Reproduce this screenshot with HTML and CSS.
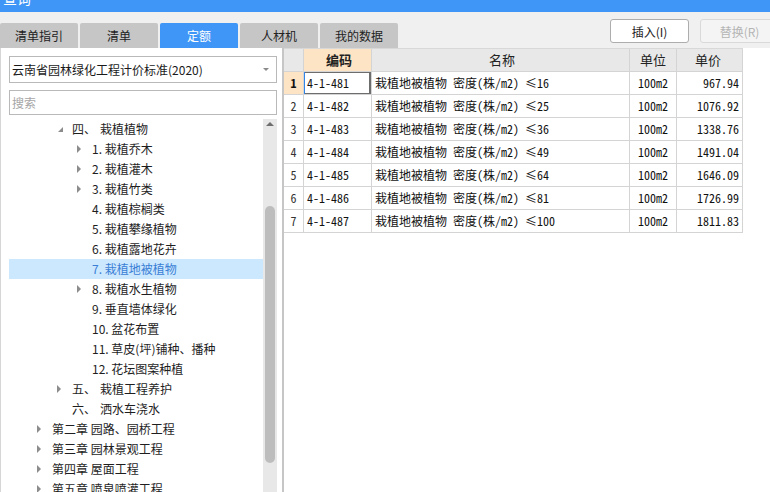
FILE: index.html
```html
<!DOCTYPE html>
<html lang="zh-CN">
<head>
<meta charset="utf-8">
<title>查询</title>
<link rel="stylesheet" href="styles.css">
</head>
<body>
<div class="titlebar"><span class="title">查询</span></div>
<div class="toolbar">
  <div class="tabs">
    <div class="tab">清单指引</div>
    <div class="tab">清单</div>
    <div class="tab active">定额</div>
    <div class="tab">人材机</div>
    <div class="tab">我的数据</div>
  </div>
  <div class="actions">
    <button class="btn">插入(I)</button>
    <button class="btn disabled">替换(R)</button>
  </div>
</div>
<div class="main">
  <aside class="side">
    <div class="select"><span>云南省园林绿化工程计价标准(2020)</span><i class="caret"></i></div>
    <div class="search">搜索</div>
    <div class="tree-wrap">
      <ul class="tree">
        <li class="node l1"><i class="tw open"></i><span class="num">四、</span>栽植植物</li>
        <li class="node l2"><i class="tw closed"></i>1. 栽植乔木</li>
        <li class="node l2"><i class="tw closed"></i>2. 栽植灌木</li>
        <li class="node l2"><i class="tw closed"></i>3. 栽植竹类</li>
        <li class="node l2"><i class="tw"></i>4. 栽植棕榈类</li>
        <li class="node l2"><i class="tw"></i>5. 栽植攀缘植物</li>
        <li class="node l2"><i class="tw"></i>6. 栽植露地花卉</li>
        <li class="node l2 selected"><i class="tw"></i>7. 栽植地被植物</li>
        <li class="node l2"><i class="tw closed"></i>8. 栽植水生植物</li>
        <li class="node l2"><i class="tw"></i>9. 垂直墙体绿化</li>
        <li class="node l2"><i class="tw"></i>10. 盆花布置</li>
        <li class="node l2"><i class="tw"></i>11. 草皮(坪)铺种、播种</li>
        <li class="node l2"><i class="tw"></i>12. 花坛图案种植</li>
        <li class="node l1"><i class="tw closed"></i><span class="num">五、</span>栽植工程养护</li>
        <li class="node l1"><i class="tw"></i><span class="num">六、</span>洒水车浇水</li>
        <li class="node l0"><i class="tw closed"></i>第二章 园路、园桥工程</li>
        <li class="node l0"><i class="tw closed"></i>第三章 园林景观工程</li>
        <li class="node l0"><i class="tw closed"></i>第四章 屋面工程</li>
        <li class="node l0"><i class="tw closed"></i>第五章 喷泉喷灌工程</li>
      </ul>
      <div class="vscroll"><i class="up"></i><span class="thumb"></span></div>
    </div>
  </aside>
  <section class="pane">
    <div class="grid">
      <div class="row head">
        <div class="c rn"></div>
        <div class="c code active-col">编码</div>
        <div class="c name">名称</div>
        <div class="c unit">单位</div>
        <div class="c price">单价</div>
      </div>
      <div class="row">
        <div class="c rn current">1</div>
        <div class="c code cursor">4-1-481</div>
        <div class="c name">栽植地被植物 密度(株/m2) ≤16</div>
        <div class="c unit">100m2</div>
        <div class="c price">967.94</div>
      </div>
      <div class="row">
        <div class="c rn">2</div>
        <div class="c code">4-1-482</div>
        <div class="c name">栽植地被植物 密度(株/m2) ≤25</div>
        <div class="c unit">100m2</div>
        <div class="c price">1076.92</div>
      </div>
      <div class="row">
        <div class="c rn">3</div>
        <div class="c code">4-1-483</div>
        <div class="c name">栽植地被植物 密度(株/m2) ≤36</div>
        <div class="c unit">100m2</div>
        <div class="c price">1338.76</div>
      </div>
      <div class="row">
        <div class="c rn">4</div>
        <div class="c code">4-1-484</div>
        <div class="c name">栽植地被植物 密度(株/m2) ≤49</div>
        <div class="c unit">100m2</div>
        <div class="c price">1491.04</div>
      </div>
      <div class="row">
        <div class="c rn">5</div>
        <div class="c code">4-1-485</div>
        <div class="c name">栽植地被植物 密度(株/m2) ≤64</div>
        <div class="c unit">100m2</div>
        <div class="c price">1646.09</div>
      </div>
      <div class="row">
        <div class="c rn">6</div>
        <div class="c code">4-1-486</div>
        <div class="c name">栽植地被植物 密度(株/m2) ≤81</div>
        <div class="c unit">100m2</div>
        <div class="c price">1726.99</div>
      </div>
      <div class="row">
        <div class="c rn">7</div>
        <div class="c code">4-1-487</div>
        <div class="c name">栽植地被植物 密度(株/m2) ≤100</div>
        <div class="c unit">100m2</div>
        <div class="c price">1811.83</div>
      </div>
    </div>
  </section>
</div>
</body>
</html>
```

FILE: styles.css
```css
* { box-sizing: border-box; }
html, body { margin: 0; padding: 0; }
body {
  width: 770px;
  height: 492px;
  overflow: hidden;
  background: #f0f0f0;
  font-family: "Noto Sans CJK SC", "Noto Sans", sans-serif;
  font-size: 12px;
  color: #222;
}

.titlebar {
  height: 12px;
  background: #3f96f6;
  overflow: hidden;
}
.title {
  display: block;
  color: #fff;
  font-size: 14px;
  line-height: 14px;
  margin-top: -9px;
  padding-left: 3px;
}

.toolbar {
  height: 36px;
  display: flex;
  justify-content: space-between;
  overflow: hidden;
}
.tabs {
  display: flex;
  gap: 2px;
  align-self: flex-end;
}
.tab {
  width: 78px;
  height: 25px;
  line-height: 25px;
  text-align: center;
  background: #c6c6c6;
  border-radius: 2px 2px 0 0;
  color: #222;
  font-size: 12px;
}
.tab.active {
  background: #3f96f6;
  color: #fff;
}
.actions {
  display: flex;
  gap: 11px;
  margin-top: 7px;
  margin-right: -9px;
  align-self: flex-start;
}
.btn {
  width: 79px;
  height: 24px;
  padding: 0;
  background: #fff;
  border: 1px solid #adadad;
  border-radius: 3px;
  font-family: "Noto Sans CJK SC", "Noto Sans", sans-serif;
  font-size: 12px;
  color: #222;
}
.btn.disabled {
  background: #f4f4f4;
  border-color: #d9d9d9;
  color: #b4b4b4;
}

.main {
  display: flex;
  height: 444px;
}
.side {
  width: 284px;
  flex: none;
  background: #fff;
  border-left: 1px solid #d6d6d6;
  border-right: 2px solid #c6c6c6;
  padding: 8px 5px 0 8px;
  display: flex;
  flex-direction: column;
  overflow: hidden;
}
.select {
  height: 27px;
  border: 1px solid #b9b9b9;
  display: flex;
  align-items: center;
  justify-content: space-between;
  padding: 0 7px 0 2px;
  font-size: 12px;
  color: #1a1a1a;
}
.caret {
  width: 0;
  height: 0;
  border-left: 3px solid transparent;
  border-right: 3px solid transparent;
  border-top: 3px solid #8a8a8a;
}
.search {
  margin-top: 7px;
  height: 25px;
  line-height: 23px;
  border: 1px solid #b9b9b9;
  padding-left: 2px;
  color: #a6a6a6;
  font-size: 12px;
}
.tree-wrap {
  margin-top: 4px;
  flex: 1;
  display: flex;
  min-height: 0;
}
.tree {
  list-style: none;
  margin: 0;
  padding: 0;
  flex: 1;
  overflow: hidden;
}
.node {
  height: 20px;
  line-height: 20px;
  display: flex;
  align-items: center;
  white-space: nowrap;
  color: #1e1e1e;
}
.node.l0 { padding-left: 28px; }
.node.l1 { padding-left: 48px; }
.node.l2 { padding-left: 68px; }
.node.selected {
  background: #cce8ff;
  color: #3a7fd5;
}
.num { margin-right: 4px; }
.tw {
  width: 15px;
  height: 20px;
  flex: none;
  position: relative;
}
.tw.closed::before {
  content: "";
  position: absolute;
  left: 0;
  top: 6px;
  border-left: 4px solid #8c8c8c;
  border-top: 4px solid transparent;
  border-bottom: 4px solid transparent;
}
.tw.open::before {
  content: "";
  position: absolute;
  left: 1px;
  top: 8px;
  border-right: 5px solid #8c8c8c;
  border-top: 5px solid transparent;
}

.vscroll {
  width: 14px;
  flex: none;
  background: #e8e8e8;
  position: relative;
}
.vscroll .up {
  position: absolute;
  left: 3px;
  top: 3px;
  border-left: 4px solid transparent;
  border-right: 4px solid transparent;
  border-bottom: 4px solid #6e6e6e;
}
.vscroll .thumb {
  position: absolute;
  left: 2px;
  top: 87px;
  width: 10px;
  height: 257px;
  border-radius: 5px;
  background: #bdbdbd;
}

.pane {
  flex: 1;
  background: #fff;
}
.grid {
  font-family: "Noto Sans Mono CJK SC", "Liberation Mono", "Noto Sans CJK SC", monospace;
  font-size: 12px;
  color: #111;
  border-top: 1px solid #d8d8d8;
  width: 459px;
}
.row {
  display: grid;
  grid-template-columns: 20px 68px 258px 47px 66px;
  height: 23px;
}
.c {
  border-right: 1px solid #d4d4d4;
  border-bottom: 1px solid #d4d4d4;
  line-height: 22px;
  white-space: nowrap;
  overflow: hidden;
}
.row.head .c {
  background: #e8e8e8;
  text-align: center;
  font-family: "Noto Sans CJK SC", sans-serif;
  font-size: 13px;
  color: #222;
}
.row.head .c.active-col {
  background: #fde4c4;
  font-weight: bold;
}
.rn {
  text-align: center;
  color: #333;
}
.rn.current {
  background: #fde4c4;
  font-weight: bold;
  color: #111;
}
.code { padding-left: 3px; }
.name { padding-left: 3px; }
.unit { text-align: center; }
.price { text-align: right; padding-right: 3px; }
.cursor {
  box-shadow: inset 1px 0 0 #2f86e8, inset -2px -1px 0 #6d6d6d, inset 0 1px 0 #6d6d6d;
}
```
